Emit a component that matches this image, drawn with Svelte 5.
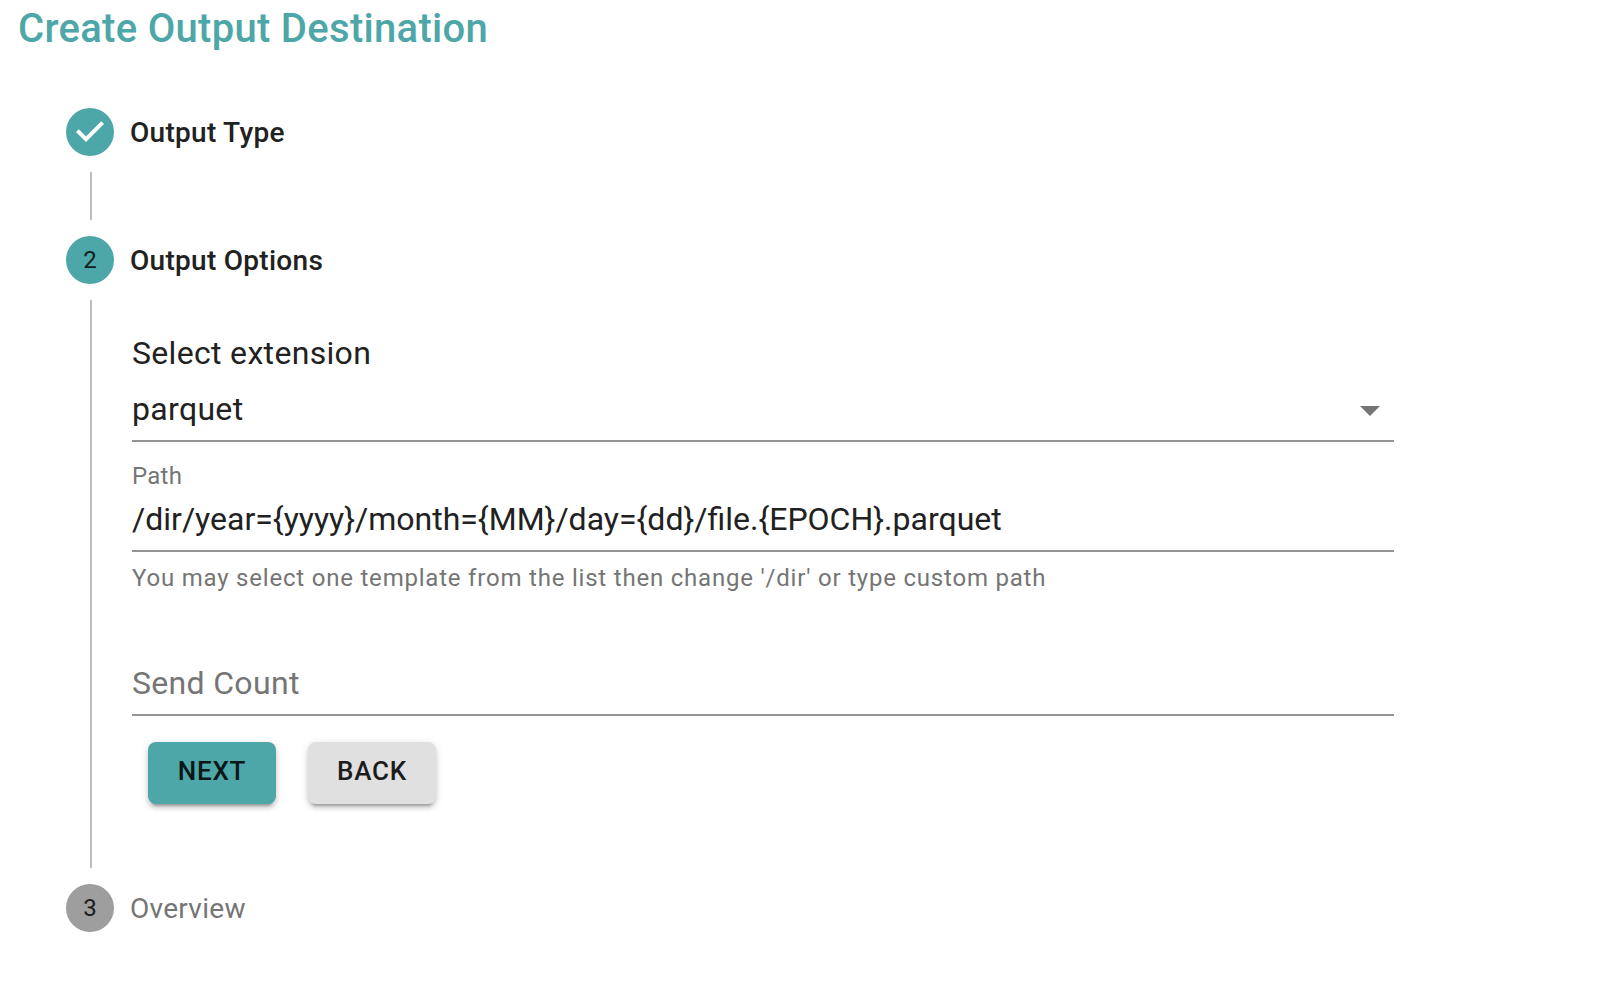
<script>
  let extension = 'parquet'
  let path = '/dir/year={yyyy}/month={MM}/day={dd}/file.{EPOCH}.parquet'
  let sendCount = ''
</script>

<main>
  <h1>Create Output Destination</h1>

  <div class="stepper">
    <div class="step done">
      <span class="badge">
        <svg viewBox="0 0 24 24" width="48" height="48" aria-hidden="true">
          <path d="M10 17l-5-5 1.4-1.4 3.6 3.6 7.6-7.6L19 8l-9 9z" fill="#fff" />
        </svg>
      </span>
      <span class="stepLabel">Output Type</span>
    </div>

    <div class="connector"></div>

    <div class="step active">
      <span class="badge">2</span>
      <span class="stepLabel">Output Options</span>
    </div>

    <form class="connector content" on:submit|preventDefault>
      <label class="title" for="extension">Select extension</label>
      <div class="selectWrap">
        <select id="extension" class="field" bind:value={extension}>
          <option value="parquet">parquet</option>
          <option value="csv">csv</option>
          <option value="json">json</option>
        </select>
        <svg class="arrow" viewBox="0 0 24 24" width="48" height="48" aria-hidden="true">
          <path d="M7 10l5 5 5-5z" fill="#757575" />
        </svg>
      </div>

      <label class="small" for="path">Path</label>
      <input id="path" class="field" type="text" bind:value={path} aria-describedby="path-help" />
      <p id="path-help" class="helper">You may select one template from the list then change '/dir' or type custom path</p>

      <input class="field count" type="text" placeholder="Send Count" aria-label="Send Count" bind:value={sendCount} />

      <div class="buttons">
        <button class="next" type="submit">NEXT</button>
        <button type="button">BACK</button>
      </div>
    </form>

    <div class="step">
      <span class="badge">3</span>
      <span class="stepLabel">Overview</span>
    </div>
  </div>
</main>

<style>
  :global(body) {
    background: #fff;
  }
  main {
    padding: 0 18px;
    font-family: Roboto, "Liberation Sans", sans-serif;
    color: #212121;
  }
  h1 {
    margin: 0;
    font-size: 40px;
    line-height: 58px;
    font-weight: 500;
    letter-spacing: 0.0075em;
    color: #4da6a8;
  }
  .stepper {
    box-sizing: border-box;
    max-width: 1440px;
    margin-top: 2px;
    padding: 48px;
  }
  .step {
    display: flex;
    align-items: center;
    gap: 16px;
  }
  .badge {
    display: flex;
    flex: none;
    align-items: center;
    justify-content: center;
    width: 48px;
    height: 48px;
    border-radius: 50%;
    background: #9e9e9e;
    color: #1c1c1c;
    font-size: 24px;
  }
  .done .badge,
  .active .badge {
    background: #4da6a8;
    color: #0f2121;
  }
  .stepLabel {
    font-size: 28px;
    letter-spacing: 0.01em;
    color: #757575;
  }
  .done .stepLabel,
  .active .stepLabel {
    font-weight: 500;
    color: #212121;
  }
  .connector {
    min-height: 48px;
    margin: 16px 0 16px 24px;
    border-left: 2px solid #bdbdbd;
  }
  .content {
    padding: 30px 16px 64px 40px;
  }
  .content label {
    display: block;
  }
  .title {
    margin-bottom: 2px;
    font-size: 32px;
    line-height: 46px;
    letter-spacing: 0.01em;
  }
  .small {
    margin-top: 22px;
    font-size: 24px;
    line-height: 24px;
    letter-spacing: 0.01em;
    color: #757575;
  }
  .selectWrap {
    position: relative;
  }
  .field {
    display: block;
    box-sizing: border-box;
    width: 100%;
    height: 64px;
    padding: 0;
    border: 0;
    border-bottom: 2px solid #949494;
    border-radius: 0;
    outline: none;
    background: transparent;
    font: inherit;
    font-size: 32px;
    color: #212121;
    appearance: none;
  }
  select.field {
    letter-spacing: 0.01em;
  }
  .field::placeholder {
    color: #757575;
    letter-spacing: 0.01em;
    opacity: 1;
  }
  .field:focus {
    border-color: #4da6a8;
  }
  .arrow {
    position: absolute;
    top: 8px;
    right: 0;
    pointer-events: none;
  }
  .helper {
    margin: 14px 0 0;
    font-size: 24px;
    line-height: 24px;
    letter-spacing: 0.033em;
    color: #757575;
  }
  .count {
    margin-top: 62px;
  }
  .buttons {
    display: flex;
    gap: 32px;
    padding: 26px 16px 0;
  }
  button {
    min-width: 128px;
    padding: 13px 20px 17px;
    border: 0;
    border-radius: 8px;
    background: #e0e0e0;
    box-shadow: 0 6px 2px -4px rgba(0, 0, 0, 0.2), 0 4px 4px rgba(0, 0, 0, 0.14), 0 2px 10px rgba(0, 0, 0, 0.12);
    font: inherit;
    font-size: 26px;
    line-height: 32px;
    font-weight: 500;
    letter-spacing: 0.028em;
    color: #1c1c1c;
    cursor: pointer;
  }
  .next {
    background: #4da6a8;
    color: #0a1717;
  }
</style>
